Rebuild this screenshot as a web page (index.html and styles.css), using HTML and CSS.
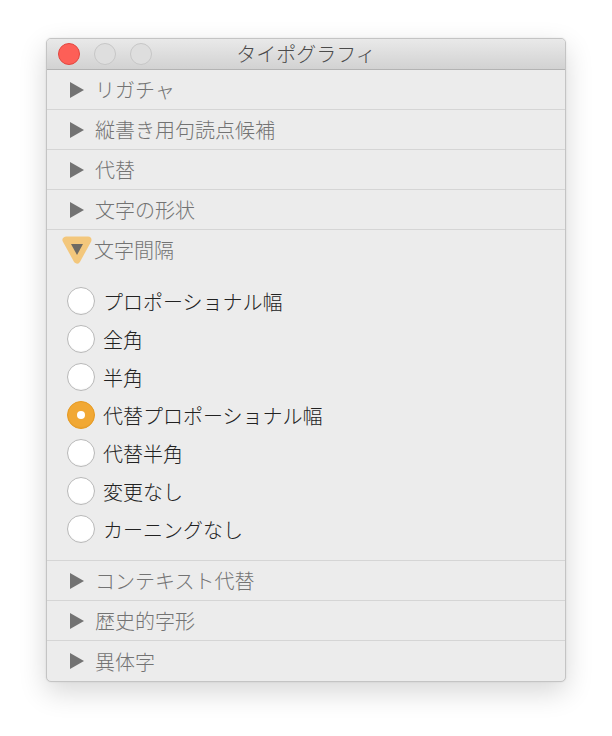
FILE: index.html
```html
<!DOCTYPE html>
<html lang="ja">
<head>
    <meta charset="UTF-8">
    <title>タイポグラフィ</title>
    <link rel="stylesheet" href="styles.css">
</head>
<body>
    <div class="window">
        <div class="titlebar">
            <div class="lights">
                <span class="light close"></span>
                <span class="light"></span>
                <span class="light"></span>
            </div>
            <div class="title">タイポグラフィ</div>
        </div>

        <div class="row"><span class="tri"></span>リガチャ</div>
        <div class="row"><span class="tri"></span>縦書き用句読点候補</div>
        <div class="row"><span class="tri"></span>代替</div>
        <div class="row"><span class="tri"></span>文字の形状</div>

        <div class="section">
            <div class="row open">
                <svg class="focus" width="30" height="28" viewBox="0 0 30 28">
                    <path d="M4 4 L26 4 L15 24 Z" fill="#f3c77c" stroke="#f3c77c" stroke-width="7" stroke-linejoin="round"/>
                    <path d="M9 8 L21 8 L15 19 Z" fill="#6e6a63"/>
                </svg>文字間隔
            </div>
            <div class="options">
                <label class="option"><span class="radio"></span>プロポーショナル幅</label>
                <label class="option"><span class="radio"></span>全角</label>
                <label class="option"><span class="radio"></span>半角</label>
                <label class="option"><span class="radio on"></span>代替プロポーショナル幅</label>
                <label class="option"><span class="radio"></span>代替半角</label>
                <label class="option"><span class="radio"></span>変更なし</label>
                <label class="option"><span class="radio"></span>カーニングなし</label>
            </div>
        </div>

        <div class="row"><span class="tri"></span>コンテキスト代替</div>
        <div class="row"><span class="tri"></span>歴史的字形</div>
        <div class="row last"><span class="tri"></span>異体字</div>
    </div>
</body>
</html>
```

FILE: styles.css
```css
html { background: #fff; }
body { margin: 0; padding: 38px 0 0 46px; min-height: 736px; box-sizing: border-box; font-family: "Noto Sans CJK JP", "Noto Sans", sans-serif; }

.window { width: 518px; background: #ececec; border: 1px solid #c4c4c4; border-radius: 5px; box-shadow: 0 10px 28px rgba(0,0,0,0.16), 0 0 2px rgba(0,0,0,0.1); overflow: hidden; }

.titlebar { height: 30px; display: flex; align-items: center; position: relative; background: linear-gradient(#e9e9e9, #d2d2d2); border-bottom: 1px solid #b3b3b3; }
.lights { display: flex; gap: 14px; padding-left: 11px; }
.light { width: 20px; height: 20px; border-radius: 50%; background: #dedede; border: 1px solid #c6c6c6; }
.light.close { background: #fd5f57; border-color: #e2463f; }
.title { position: absolute; left: 0; right: 0; text-align: center; font-size: 20px; font-weight: 300; color: #4b4b4b; line-height: 30px; }

.row { height: 39px; border-bottom: 1px solid #d5d5d5; display: flex; align-items: center; font-size: 20px; font-weight: 300; color: #737373; }
.row.last { border-bottom: none; height: 40px; }
.tri { width: 0; height: 0; border-top: 8.5px solid transparent; border-bottom: 8.5px solid transparent; border-left: 14px solid #737373; margin: 0 11px 0 23px; }

.section { border-bottom: 1px solid #d5d5d5; }
.row.open { border-bottom: none; }
.focus { margin: 1px 2px 0 15px; }

.options { padding: 13px 0 12px; }
.option { height: 38px; display: flex; align-items: center; font-size: 20px; font-weight: 300; color: #222; }
.radio { width: 26px; height: 26px; border-radius: 50%; background: #fff; border: 1px solid #b8b8b8; box-shadow: inset 0 -1px 1px rgba(0,0,0,0.04); margin: 0 8px 0 20px; display: flex; justify-content: center; align-items: center; }
.radio.on { background: #f1a834; border-color: #e69a22; }
.radio.on::after { content: ""; width: 8px; height: 8px; border-radius: 50%; background: #fff; }
```
